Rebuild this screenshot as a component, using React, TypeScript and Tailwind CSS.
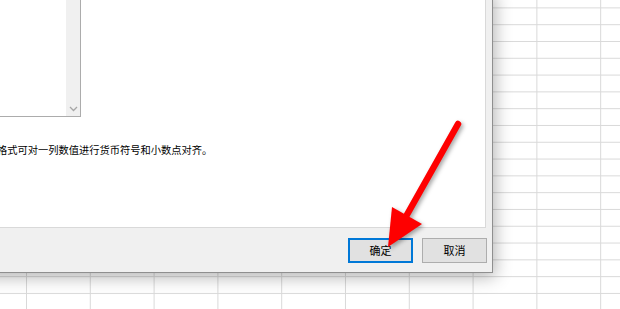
import React from 'react'

const cjk = { fontFamily: '"Noto Sans CJK SC", "Microsoft YaHei", sans-serif' }

const Sheet = () => (
  <div className="absolute inset-0 bg-white bg-[linear-gradient(to_right,#d9d9d9_1px,transparent_1px),linear-gradient(to_bottom,#d9d9d9_1px,transparent_1px)] bg-[size:63.8px_16.8px] bg-[position:26px_7.4px]" />
)

const Arrow = () => (
  <svg
    className="absolute inset-0 pointer-events-none drop-shadow-[2px_2px_2px_rgba(0,0,0,0.35)]"
    width="620"
    height="309"
    viewBox="0 0 620 309"
  >
    <line x1="458" y1="124" x2="404" y2="220" stroke="#fe0000" strokeWidth="6.5" strokeLinecap="round" />
    <polygon points="392,207 422,224 388,247" fill="#fe0000" />
  </svg>
)

const App = () => {
  return (
    <div className="relative w-[620px] h-[309px] overflow-hidden bg-white" style={cjk}>
      <Sheet />

      {/* dialog, only the lower right part shows */}
      <div className="absolute left-[-20px] top-[-10px] w-[513px] h-[283px] flex flex-col bg-[#f0f0f0] border border-[#8f8f8f] shadow-[2px_4px_16px_rgba(0,0,0,0.3)]">
        <div className="flex-1 mx-[6px] mt-[6px] flex flex-col bg-white border border-[#d9d9d9]">
          <div className="flex">
            <div className="w-[93px] h-[119px] flex border border-[#acacac] bg-white">
              <div className="flex-1" />
              <div className="w-[14px] flex flex-col justify-end items-center pb-[4px] bg-[#f0f0f0]">
                <svg width="9" height="6" viewBox="0 0 9 6">
                  <path d="M1 1 L4.5 4.5 L8 1" fill="none" stroke="#a6a6a6" strokeWidth="1.3" />
                </svg>
              </div>
            </div>
          </div>
          <p className="mt-[26px] pl-[9px] text-[10.25px] leading-[14px] text-black whitespace-nowrap">
            格式可对一列数值进行货币符号和小数点对齐。
          </p>
        </div>

        <div className="h-[44px] flex justify-end items-start gap-[9px] pt-[10px] pr-[5px]">
          <button className="w-[65px] h-[25px] flex items-center justify-center bg-[#e1e1e1] border-2 border-[#0078d7] text-[11px] text-black">
            确定
          </button>
          <button className="w-[65px] h-[25px] flex items-center justify-center bg-[#e1e1e1] border border-[#adadad] text-[11px] text-black">
            取消
          </button>
        </div>
      </div>

      <Arrow />
    </div>
  )
}

export default App
